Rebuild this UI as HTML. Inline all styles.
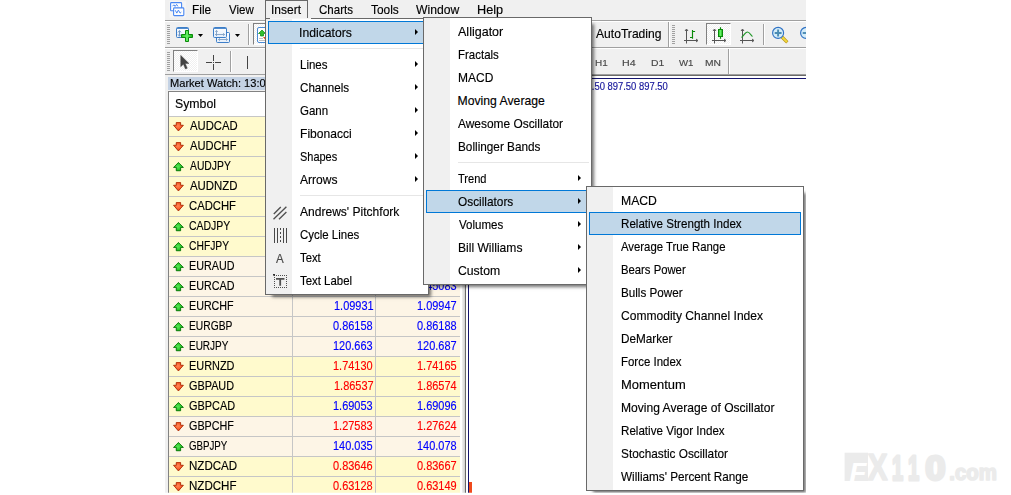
<!DOCTYPE html>
<html lang="en"><head><meta charset="utf-8"><title>MetaTrader - Insert Indicators</title>
<style>
html,body{margin:0;padding:0;background:#fff}
body{width:1011px;height:495px;overflow:hidden;position:relative;font-family:"Liberation Sans",sans-serif;font-size:12.2px;line-height:16px;color:#000}
#app{position:absolute;left:165px;top:0;width:641px;height:493px;background:#f0f0f0;overflow:hidden}
#app i,.menu i,#app div,.menu div{position:absolute;display:block}
.t{position:absolute;white-space:nowrap;transform-origin:0 0;display:block;-webkit-text-stroke:.15px}
.ic{position:absolute;overflow:visible}
.ar{filter:drop-shadow(.5px .7px .5px rgba(0,0,0,.28))}
.hl{left:0;width:641px;height:1px}
.row{left:4px;width:291px;height:19px;border-bottom:1px solid #c6c6c6}
.menu{position:absolute;background:#fff;border:1px solid #696969;box-sizing:border-box}
.sh{position:absolute;box-shadow:1.6px 1.6px 3.2px 0 rgba(0,0,0,.55)}
.menu .gut{left:0;top:0;bottom:0;width:26px;background:#f0f0f0}
.menu .sep{height:1px;background:#e6e6e6}
.menu .hot{height:23px;box-sizing:border-box;border:1px solid #0078d7;background:#c1d7e9}
.menu .arr{width:0;height:0;border-left:3.5px solid #000;border-top:3px solid transparent;border-bottom:3px solid transparent;margin-top:.3px}
.dith{background:repeating-conic-gradient(#fff 0 25%,#f0f0f0 0 50%) 0 0/2px 2px}
.grip{width:3px;background:repeating-linear-gradient(#a0a0a0 0 1px,transparent 1px 2px)}
.vsep{width:1px;background:#a0a0a0;box-shadow:1px 0 0 #fff}
.pressed{box-sizing:border-box;border:1px solid #fff;border-left-color:#808080;border-top-color:#808080}
</style></head>
<body>
<svg width="0" height="0" style="position:absolute"><defs>
<radialGradient id="gu" cx="0.45" cy="0.5" r="0.6"><stop offset="0" stop-color="#58e858"/><stop offset="0.6" stop-color="#2cc82c"/><stop offset="1" stop-color="#10a010"/></radialGradient>
<radialGradient id="gd" cx="0.45" cy="0.4" r="0.6"><stop offset="0" stop-color="#ff8858"/><stop offset="0.6" stop-color="#f85c2c"/><stop offset="1" stop-color="#d83810"/></radialGradient>
<linearGradient id="gp" x1="0" y1="0" x2="1" y2="0"><stop offset="0" stop-color="#22c422"/><stop offset="0.5" stop-color="#66f066"/><stop offset="1" stop-color="#12b012"/></linearGradient>
<linearGradient id="gw" x1="0" y1="0" x2="0" y2="1"><stop offset="0" stop-color="#ffffff"/><stop offset="1" stop-color="#e4eefa"/></linearGradient>
</defs></svg>
<div id="app">
<i class="hl" style="top:20px;background:#a0a0a0"></i><i class="hl" style="top:21px;background:#fff"></i>
<i class="hl" style="top:47px;background:#a0a0a0"></i><i class="hl" style="top:48px;background:#fff"></i>
<i class="hl" style="top:74px;background:#a0a0a0"></i>
<i style="left:300px;top:75px;width:341px;height:1px;background:#696969"></i>
<div style="left:301px;top:76px;width:340px;height:420px;background:#fff"></div>
<i style="left:300px;top:76px;width:1px;height:420px;background:#696969"></i>
<i style="left:303px;top:78px;width:338px;height:1px;background:#14146e"></i>
<i style="left:303px;top:78px;width:1px;height:420px;background:#14146e"></i>
<i style="left:304px;top:482px;width:3px;height:12px;background:#f04a1c"></i>
<div style="left:3px;top:77px;width:294px;height:13px;background:#c4d2e4"></div>
<div style="left:3px;top:91px;width:294px;height:410px;background:#fff;border-left:1px solid #828282;border-top:1px solid #828282;box-sizing:border-box"></div>
<i style="left:297px;top:91px;width:3px;height:410px;background:linear-gradient(90deg,#f0f0f0,#d0d0d0)"></i>
<i style="left:4px;top:116px;width:291px;height:1px;background:#c6c6c6"></i>
<div class="row" style="top:117px;background:#fffacd"></div>
<svg class="ic ar" style="left:8.099999999999994px;top:122.0px" width="12" height="11" viewBox="0 0 12 11"><path d="M3.3 0.6 L7.6 0.6 L7.6 3.3 L10.3 3.3 L5.45 8.9 L0.6 3.3 L3.3 3.3 Z" fill="url(#gd)" stroke="#b83008" stroke-width="0.9" stroke-linejoin="round"/></svg>
<div class="row" style="top:137px;background:#fffacd"></div>
<svg class="ic ar" style="left:8.099999999999994px;top:142.0px" width="12" height="11" viewBox="0 0 12 11"><path d="M3.3 0.6 L7.6 0.6 L7.6 3.3 L10.3 3.3 L5.45 8.9 L0.6 3.3 L3.3 3.3 Z" fill="url(#gd)" stroke="#b83008" stroke-width="0.9" stroke-linejoin="round"/></svg>
<div class="row" style="top:157px;background:#fffacd"></div>
<svg class="ic ar" style="left:8.099999999999994px;top:162.0px" width="12" height="11" viewBox="0 0 12 11"><path d="M5.45 0.5 L10.3 5.4 L7.6 5.4 L7.6 8.7 L3.3 8.7 L3.3 5.4 L0.6 5.4 Z" fill="url(#gu)" stroke="#087c08" stroke-width="0.9" stroke-linejoin="round"/></svg>
<div class="row" style="top:177px;background:#fffacd"></div>
<svg class="ic ar" style="left:8.099999999999994px;top:182.0px" width="12" height="11" viewBox="0 0 12 11"><path d="M3.3 0.6 L7.6 0.6 L7.6 3.3 L10.3 3.3 L5.45 8.9 L0.6 3.3 L3.3 3.3 Z" fill="url(#gd)" stroke="#b83008" stroke-width="0.9" stroke-linejoin="round"/></svg>
<div class="row" style="top:197px;background:#fffacd"></div>
<svg class="ic ar" style="left:8.099999999999994px;top:202.0px" width="12" height="11" viewBox="0 0 12 11"><path d="M3.3 0.6 L7.6 0.6 L7.6 3.3 L10.3 3.3 L5.45 8.9 L0.6 3.3 L3.3 3.3 Z" fill="url(#gd)" stroke="#b83008" stroke-width="0.9" stroke-linejoin="round"/></svg>
<div class="row" style="top:217px;background:#fffacd"></div>
<svg class="ic ar" style="left:8.099999999999994px;top:222.0px" width="12" height="11" viewBox="0 0 12 11"><path d="M5.45 0.5 L10.3 5.4 L7.6 5.4 L7.6 8.7 L3.3 8.7 L3.3 5.4 L0.6 5.4 Z" fill="url(#gu)" stroke="#087c08" stroke-width="0.9" stroke-linejoin="round"/></svg>
<div class="row" style="top:237px;background:#fffacd"></div>
<svg class="ic ar" style="left:8.099999999999994px;top:242.0px" width="12" height="11" viewBox="0 0 12 11"><path d="M5.45 0.5 L10.3 5.4 L7.6 5.4 L7.6 8.7 L3.3 8.7 L3.3 5.4 L0.6 5.4 Z" fill="url(#gu)" stroke="#087c08" stroke-width="0.9" stroke-linejoin="round"/></svg>
<div class="row" style="top:257px;background:#fdf5e6"></div>
<svg class="ic ar" style="left:8.099999999999994px;top:262.0px" width="12" height="11" viewBox="0 0 12 11"><path d="M5.45 0.5 L10.3 5.4 L7.6 5.4 L7.6 8.7 L3.3 8.7 L3.3 5.4 L0.6 5.4 Z" fill="url(#gu)" stroke="#087c08" stroke-width="0.9" stroke-linejoin="round"/></svg>
<div class="row" style="top:277px;background:#fdf5e6"></div>
<svg class="ic ar" style="left:8.099999999999994px;top:282.0px" width="12" height="11" viewBox="0 0 12 11"><path d="M5.45 0.5 L10.3 5.4 L7.6 5.4 L7.6 8.7 L3.3 8.7 L3.3 5.4 L0.6 5.4 Z" fill="url(#gu)" stroke="#087c08" stroke-width="0.9" stroke-linejoin="round"/></svg>
<div class="row" style="top:297px;background:#fdf5e6"></div>
<svg class="ic ar" style="left:8.099999999999994px;top:302.0px" width="12" height="11" viewBox="0 0 12 11"><path d="M5.45 0.5 L10.3 5.4 L7.6 5.4 L7.6 8.7 L3.3 8.7 L3.3 5.4 L0.6 5.4 Z" fill="url(#gu)" stroke="#087c08" stroke-width="0.9" stroke-linejoin="round"/></svg>
<div class="row" style="top:317px;background:#fdf5e6"></div>
<svg class="ic ar" style="left:8.099999999999994px;top:322.0px" width="12" height="11" viewBox="0 0 12 11"><path d="M5.45 0.5 L10.3 5.4 L7.6 5.4 L7.6 8.7 L3.3 8.7 L3.3 5.4 L0.6 5.4 Z" fill="url(#gu)" stroke="#087c08" stroke-width="0.9" stroke-linejoin="round"/></svg>
<div class="row" style="top:337px;background:#fdf5e6"></div>
<svg class="ic ar" style="left:8.099999999999994px;top:342.0px" width="12" height="11" viewBox="0 0 12 11"><path d="M5.45 0.5 L10.3 5.4 L7.6 5.4 L7.6 8.7 L3.3 8.7 L3.3 5.4 L0.6 5.4 Z" fill="url(#gu)" stroke="#087c08" stroke-width="0.9" stroke-linejoin="round"/></svg>
<div class="row" style="top:357px;background:#fffacd"></div>
<svg class="ic ar" style="left:8.099999999999994px;top:362.0px" width="12" height="11" viewBox="0 0 12 11"><path d="M3.3 0.6 L7.6 0.6 L7.6 3.3 L10.3 3.3 L5.45 8.9 L0.6 3.3 L3.3 3.3 Z" fill="url(#gd)" stroke="#b83008" stroke-width="0.9" stroke-linejoin="round"/></svg>
<div class="row" style="top:377px;background:#fffacd"></div>
<svg class="ic ar" style="left:8.099999999999994px;top:382.0px" width="12" height="11" viewBox="0 0 12 11"><path d="M3.3 0.6 L7.6 0.6 L7.6 3.3 L10.3 3.3 L5.45 8.9 L0.6 3.3 L3.3 3.3 Z" fill="url(#gd)" stroke="#b83008" stroke-width="0.9" stroke-linejoin="round"/></svg>
<div class="row" style="top:397px;background:#fffacd"></div>
<svg class="ic ar" style="left:8.099999999999994px;top:402.0px" width="12" height="11" viewBox="0 0 12 11"><path d="M5.45 0.5 L10.3 5.4 L7.6 5.4 L7.6 8.7 L3.3 8.7 L3.3 5.4 L0.6 5.4 Z" fill="url(#gu)" stroke="#087c08" stroke-width="0.9" stroke-linejoin="round"/></svg>
<div class="row" style="top:417px;background:#fdf5e6"></div>
<svg class="ic ar" style="left:8.099999999999994px;top:422.0px" width="12" height="11" viewBox="0 0 12 11"><path d="M3.3 0.6 L7.6 0.6 L7.6 3.3 L10.3 3.3 L5.45 8.9 L0.6 3.3 L3.3 3.3 Z" fill="url(#gd)" stroke="#b83008" stroke-width="0.9" stroke-linejoin="round"/></svg>
<div class="row" style="top:437px;background:#fdf5e6"></div>
<svg class="ic ar" style="left:8.099999999999994px;top:442.0px" width="12" height="11" viewBox="0 0 12 11"><path d="M5.45 0.5 L10.3 5.4 L7.6 5.4 L7.6 8.7 L3.3 8.7 L3.3 5.4 L0.6 5.4 Z" fill="url(#gu)" stroke="#087c08" stroke-width="0.9" stroke-linejoin="round"/></svg>
<div class="row" style="top:457px;background:#fffacd"></div>
<svg class="ic ar" style="left:8.099999999999994px;top:462.0px" width="12" height="11" viewBox="0 0 12 11"><path d="M3.3 0.6 L7.6 0.6 L7.6 3.3 L10.3 3.3 L5.45 8.9 L0.6 3.3 L3.3 3.3 Z" fill="url(#gd)" stroke="#b83008" stroke-width="0.9" stroke-linejoin="round"/></svg>
<div class="row" style="top:477px;background:#fffacd"></div>
<svg class="ic ar" style="left:8.099999999999994px;top:482.0px" width="12" height="11" viewBox="0 0 12 11"><path d="M3.3 0.6 L7.6 0.6 L7.6 3.3 L10.3 3.3 L5.45 8.9 L0.6 3.3 L3.3 3.3 Z" fill="url(#gd)" stroke="#b83008" stroke-width="0.9" stroke-linejoin="round"/></svg>
<i style="left:127px;top:92px;width:1px;height:410px;background:#c6c6c6"></i>
<i style="left:210px;top:92px;width:1px;height:410px;background:#c6c6c6"></i>
<svg class="ic" style="left:4px;top:0" width="20" height="18" viewBox="0 0 20 18">
<rect x="0.5" y="1" width="16.5" height="16.5" fill="#f5f5f5"/>
<rect x="1.6" y="2.6" width="11" height="8.2" rx="0.8" fill="#fff" stroke="#4a88f2" stroke-width="1.1"/>
<path d="M3.5 6.2 l1.4-1.4 1.2 1.6 1.5-2 1.3 2" fill="none" stroke="#4a88f2" stroke-width="1"/>
<rect x="4.6" y="7.9" width="10.2" height="7.7" rx="0.8" fill="#fff" stroke="#4a88f2" stroke-width="1.1"/>
<path d="M6.3 10.3 l1.5 2.8 1.6-3 1.7 3 1.2-1" fill="none" stroke="#4a88f2" stroke-width="1"/>
</svg>
<i class="grip" style="left:2px;top:25px;height:19px"></i>
<svg class="ic" style="left:10px;top:26px" width="20" height="18" viewBox="175 26 20 18">
<rect x="176.5" y="27.5" width="12" height="10" rx="1" fill="url(#gw)" stroke="#3d7ec8"/>
<rect x="177" y="28" width="11" height="0.9" fill="#3d7ec8"/>
<path d="M179.5 30.6 v5.6 M178 32.4 l1.5-1.8 1.5 1.8 M178 34.4 l1.5 1.8 1.5-1.8" fill="none" stroke="#6f98c8" stroke-width="1"/>
<path d="M185.5 30.5 h3 v4 h4 v3 h-4 v4 h-3 v-4 h-4 v-3 h4 z" fill="url(#gp)" stroke="#0a8a0a" stroke-linejoin="round"/>
</svg>
<svg class="ic" style="left:33px;top:34px" width="5" height="3" viewBox="0 0 5 3"><path d="M0 0h5L2.5 3z" fill="#000"/></svg>
<svg class="ic" style="left:47px;top:26px" width="20" height="18" viewBox="212 26 20 18">
<rect x="216.5" y="32.5" width="13" height="10" rx="1" fill="url(#gw)" stroke="#3d7ec8"/>
<path d="M218.5 39.5 h9 M220 38.3 l-1.5 1.2 1.5 1.2 M226 38.3 l1.5 1.2 -1.5 1.2" fill="none" stroke="#7f9fc4" stroke-width="0.9"/>
<rect x="213.5" y="27.5" width="13" height="10" rx="1" fill="url(#gw)" stroke="#3d7ec8"/>
<rect x="214" y="28" width="12" height="0.9" fill="#3d7ec8"/>
<path d="M216.5 30.5 v5.5 M215 34.5 h9.5 M215.3 31.8 l1.2-1.4 1.2 1.4 M223.2 33.3 l1.4 1.2 -1.4 1.2" fill="none" stroke="#7f9fc4" stroke-width="0.9"/>
</svg>
<svg class="ic" style="left:70px;top:34px" width="5" height="3" viewBox="0 0 5 3"><path d="M0 0h5L2.5 3z" fill="#000"/></svg>
<i class="vsep" style="left:83px;top:24px;height:21px"></i>
<div class="pressed dith" style="left:88px;top:23px;width:25px;height:22px"></div>
<svg class="ic" style="left:91px;top:26px" width="14" height="18" viewBox="256 26 14 18">
<rect x="257.5" y="27.5" width="12" height="15" rx="1.5" fill="#fff" stroke="#4a8ad4"/>
<path d="M262 30 l3.5 3.5 h-2 v2.5 h-3 v-2.5 h-2 z" fill="#2fc02f" stroke="#0a8a0a" stroke-width="0.7"/>
<path d="M263 37 h4 l-2 2.5z" fill="#e8501a"/>
<path d="M259 38.5h4M259 40.5h7" stroke="#b0b0b0" stroke-width="0.8"/>
</svg>
<i class="vsep" style="left:503px;top:22px;height:25px"></i>
<i class="grip" style="left:507px;top:25px;height:19px"></i>
<svg class="ic" style="left:517px;top:26px" width="18" height="19" viewBox="682 26 18 19">
<path d="M686.5 29.5 v14 M684 40.5 h13.5 M685 31 l1.5-2 1.5 2 M696 39 l2 1.5 -2 1.5" fill="none" stroke="#555" stroke-width="1"/>
<path d="M692.5 30 v8.7 M692.5 31.5 h2.6 M690 37.5 h2.5" fill="none" stroke="#0a8a0a" stroke-width="1.15"/>
</svg>
<div class="pressed dith" style="left:541px;top:23px;width:25px;height:22px"></div>
<svg class="ic" style="left:545px;top:26px" width="18" height="19" viewBox="710 26 18 19">
<path d="M714.5 29.5 v14 M712 40.5 h13.5 M713 31 l1.5-2 1.5 2 M724 39 l2 1.5 -2 1.5" fill="none" stroke="#555" stroke-width="1"/>
<path d="M720.5 27.2 v11.6" stroke="#0a8a0a" stroke-width="1.2"/>
<rect x="718.5" y="29.5" width="4" height="7" fill="url(#gp)" stroke="#0a8a0a"/>
</svg>
<svg class="ic" style="left:573px;top:26px" width="18" height="19" viewBox="738 26 18 19">
<path d="M742.5 29.5 v14 M740 40.5 h13.5 M741 31 l1.5-2 1.5 2 M752 39 l2 1.5 -2 1.5" fill="none" stroke="#555" stroke-width="1"/>
<path d="M741.5 37.5 C744 35 745.5 32 747.5 32 S751 35.5 752.5 36.5" fill="none" stroke="#22982a" stroke-width="1.15"/>
</svg>
<i class="vsep" style="left:598px;top:24px;height:21px"></i>
<svg class="ic" style="left:605px;top:25px" width="20" height="20" viewBox="770 25 20 20">
<path d="M782 37 L787.3 42.3" stroke="#b8901a" stroke-width="3.2"/><path d="M782 37 L787 42" stroke="#f0d83c" stroke-width="1.9"/>
<circle cx="778.1" cy="32.9" r="5.5" fill="#d4ecf8" stroke="#2f72c4" stroke-width="1.15"/>
<path d="M774.7 33 h6.9 M778.1 29.5 v6.9" stroke="#4a8cb4" stroke-width="1.9"/>
</svg>
<svg class="ic" style="left:633px;top:25px" width="20" height="20" viewBox="798 25 20 20">
<circle cx="806.1" cy="32.9" r="5.5" fill="#d4ecf8" stroke="#2f72c4" stroke-width="1.15"/>
<path d="M802.7 33 h6.9" stroke="#4a8cb4" stroke-width="1.9"/>
</svg>
<i class="grip" style="left:2px;top:52px;height:19px"></i>
<div class="pressed dith" style="left:8px;top:50px;width:25px;height:22px"></div>
<svg class="ic" style="left:14px;top:54px" width="12" height="17" viewBox="179 54 12 17">
<path d="M180.7 55.3 v11.5 l2.7-2.6 2 4.8 1.9-0.8 -2-4.7 h3.7 z" fill="#444" stroke="#444" stroke-width="0.4"/>
</svg>
<svg class="ic" style="left:40px;top:54px" width="18" height="18" viewBox="205 54 18 18">
<path d="M213.5 55 v6 M213.5 64 v6 M206 62.5 h6 M215 62.5 h6" stroke="#444" stroke-width="1"/><rect x="213" y="62" width="1" height="1" fill="#444"/>
</svg>
<i class="vsep" style="left:65px;top:51px;height:21px"></i>
<i style="left:82px;top:56px;width:1px;height:13px;background:#444"></i>
<i class="vsep" style="left:563px;top:49px;height:25px"></i>
<span class="t" style="left:27.32px;top:1.77px;transform:scaleX(0.9767)">File</span>
<span class="t" style="left:64.20px;top:1.77px;transform:scaleX(0.9435)">View</span>
<span class="t" style="left:106.09px;top:1.77px;transform:scaleX(0.9827)">Insert</span>
<span class="t" style="left:154.07px;top:1.77px;transform:scaleX(0.9469)">Charts</span>
<span class="t" style="left:205.86px;top:1.77px;transform:scaleX(0.9742)">Tools</span>
<span class="t" style="left:251.30px;top:1.77px;transform:scaleX(0.9988)">Window</span>
<span class="t" style="left:312.36px;top:1.77px;transform:scaleX(1.0416)">Help</span>
<span class="t" style="left:431.20px;top:25.77px;transform:scaleX(0.9935)">AutoTrading</span>
<span class="t" style="left:430.04px;top:56.10px;transform:scaleX(1.0153);font-size:9.8px;line-height:13px;color:#484848">H1</span>
<span class="t" style="left:456.69px;top:56.10px;transform:scaleX(1.0856);font-size:9.8px;line-height:13px;color:#484848">H4</span>
<span class="t" style="left:485.71px;top:56.10px;transform:scaleX(1.0594);font-size:9.8px;line-height:13px;color:#484848">D1</span>
<span class="t" style="left:514.10px;top:56.10px;transform:scaleX(0.9825);font-size:9.8px;line-height:13px;color:#484848">W1</span>
<span class="t" style="left:540.01px;top:56.10px;transform:scaleX(1.0491);font-size:9.8px;line-height:13px;color:#484848">MN</span>
<span class="t" style="left:322.53px;top:80.03px;transform:scaleX(0.9429);font-size:10px;line-height:13px;color:#14149a">XAUUSD,H1  897.50 897.50 897.50 897.50</span>
<span class="t" style="left:5.02px;top:76.19px;transform:scaleX(1.0069);font-size:11px;line-height:14px">Market Watch: 13:05:21</span>
<span class="t" style="left:9.69px;top:95.77px;transform:scaleX(1.0100)">Symbol</span>
<span class="t" style="left:131.99px;top:95.77px;transform:scaleX(1.0100)">Bid</span>
<span class="t" style="left:217.00px;top:95.77px;transform:scaleX(1.0100)">Ask</span>
<span class="t" style="left:24.60px;top:117.77px;transform:scaleX(0.9244)">AUDCAD</span>
<span class="t" style="left:168.44px;top:117.84px;transform:scaleX(0.9129);font-size:12px;line-height:16px;color:#ff0000">0.95513</span>
<span class="t" style="left:252.04px;top:117.84px;transform:scaleX(0.9129);font-size:12px;line-height:16px;color:#ff0000">0.95546</span>
<span class="t" style="left:24.60px;top:137.77px;transform:scaleX(0.9151)">AUDCHF</span>
<span class="t" style="left:168.50px;top:137.84px;transform:scaleX(0.9129);font-size:12px;line-height:16px;color:#ff0000">0.72057</span>
<span class="t" style="left:252.10px;top:137.84px;transform:scaleX(0.9129);font-size:12px;line-height:16px;color:#ff0000">0.72082</span>
<span class="t" style="left:24.60px;top:157.77px;transform:scaleX(0.8482)">AUDJPY</span>
<span class="t" style="left:174.59px;top:157.84px;transform:scaleX(0.9129);font-size:12px;line-height:16px;color:#0000ff">79.089</span>
<span class="t" style="left:258.89px;top:157.84px;transform:scaleX(0.9129);font-size:12px;line-height:16px;color:#0000ff">79.110</span>
<span class="t" style="left:24.60px;top:177.77px;transform:scaleX(0.9370)">AUDNZD</span>
<span class="t" style="left:168.50px;top:177.84px;transform:scaleX(0.9129);font-size:12px;line-height:16px;color:#ff0000">1.14127</span>
<span class="t" style="left:252.04px;top:177.84px;transform:scaleX(0.9129);font-size:12px;line-height:16px;color:#ff0000">1.14166</span>
<span class="t" style="left:24.08px;top:197.77px;transform:scaleX(0.9254)">CADCHF</span>
<span class="t" style="left:168.50px;top:197.84px;transform:scaleX(0.9129);font-size:12px;line-height:16px;color:#ff0000">0.75431</span>
<span class="t" style="left:252.04px;top:197.84px;transform:scaleX(0.9129);font-size:12px;line-height:16px;color:#ff0000">0.75456</span>
<span class="t" style="left:24.12px;top:217.77px;transform:scaleX(0.8583)">CADJPY</span>
<span class="t" style="left:174.37px;top:217.84px;transform:scaleX(0.9129);font-size:12px;line-height:16px;color:#0000ff">82.794</span>
<span class="t" style="left:258.14px;top:217.84px;transform:scaleX(0.9129);font-size:12px;line-height:16px;color:#0000ff">82.823</span>
<span class="t" style="left:24.12px;top:237.77px;transform:scaleX(0.8451)">CHFJPY</span>
<span class="t" style="left:168.44px;top:237.84px;transform:scaleX(0.9129);font-size:12px;line-height:16px;color:#0000ff">109.746</span>
<span class="t" style="left:252.10px;top:237.84px;transform:scaleX(0.9129);font-size:12px;line-height:16px;color:#0000ff">109.779</span>
<span class="t" style="left:23.72px;top:257.77px;transform:scaleX(0.8828)">EURAUD</span>
<span class="t" style="left:168.44px;top:257.84px;transform:scaleX(0.9129);font-size:12px;line-height:16px;color:#0000ff">1.52548</span>
<span class="t" style="left:252.04px;top:257.84px;transform:scaleX(0.9129);font-size:12px;line-height:16px;color:#0000ff">1.52583</span>
<span class="t" style="left:23.72px;top:277.77px;transform:scaleX(0.8828)">EURCAD</span>
<span class="t" style="left:168.50px;top:277.84px;transform:scaleX(0.9129);font-size:12px;line-height:16px;color:#0000ff">1.45049</span>
<span class="t" style="left:252.04px;top:277.84px;transform:scaleX(0.9129);font-size:12px;line-height:16px;color:#0000ff">1.45083</span>
<span class="t" style="left:23.72px;top:297.77px;transform:scaleX(0.8790)">EURCHF</span>
<span class="t" style="left:168.50px;top:297.84px;transform:scaleX(0.9129);font-size:12px;line-height:16px;color:#0000ff">1.09931</span>
<span class="t" style="left:252.10px;top:297.84px;transform:scaleX(0.9129);font-size:12px;line-height:16px;color:#0000ff">1.09947</span>
<span class="t" style="left:23.76px;top:317.77px;transform:scaleX(0.8420)">EURGBP</span>
<span class="t" style="left:168.44px;top:317.84px;transform:scaleX(0.9129);font-size:12px;line-height:16px;color:#0000ff">0.86158</span>
<span class="t" style="left:252.04px;top:317.84px;transform:scaleX(0.9129);font-size:12px;line-height:16px;color:#0000ff">0.86188</span>
<span class="t" style="left:23.78px;top:337.77px;transform:scaleX(0.8193)">EURJPY</span>
<span class="t" style="left:168.44px;top:337.84px;transform:scaleX(0.9129);font-size:12px;line-height:16px;color:#0000ff">120.663</span>
<span class="t" style="left:252.10px;top:337.84px;transform:scaleX(0.9129);font-size:12px;line-height:16px;color:#0000ff">120.687</span>
<span class="t" style="left:23.70px;top:357.77px;transform:scaleX(0.8951)">EURNZD</span>
<span class="t" style="left:168.39px;top:357.84px;transform:scaleX(0.9129);font-size:12px;line-height:16px;color:#ff0000">1.74130</span>
<span class="t" style="left:252.04px;top:357.84px;transform:scaleX(0.9129);font-size:12px;line-height:16px;color:#ff0000">1.74165</span>
<span class="t" style="left:24.10px;top:377.77px;transform:scaleX(0.8911)">GBPAUD</span>
<span class="t" style="left:168.50px;top:377.84px;transform:scaleX(0.9129);font-size:12px;line-height:16px;color:#ff0000">1.86537</span>
<span class="t" style="left:251.87px;top:377.84px;transform:scaleX(0.9129);font-size:12px;line-height:16px;color:#ff0000">1.86574</span>
<span class="t" style="left:24.10px;top:397.77px;transform:scaleX(0.8949)">GBPCAD</span>
<span class="t" style="left:168.44px;top:397.84px;transform:scaleX(0.9129);font-size:12px;line-height:16px;color:#0000ff">1.69053</span>
<span class="t" style="left:252.04px;top:397.84px;transform:scaleX(0.9129);font-size:12px;line-height:16px;color:#0000ff">1.69096</span>
<span class="t" style="left:24.10px;top:417.77px;transform:scaleX(0.8852)">GBPCHF</span>
<span class="t" style="left:168.44px;top:417.84px;transform:scaleX(0.9129);font-size:12px;line-height:16px;color:#ff0000">1.27583</span>
<span class="t" style="left:251.87px;top:417.84px;transform:scaleX(0.9129);font-size:12px;line-height:16px;color:#ff0000">1.27624</span>
<span class="t" style="left:24.15px;top:437.77px;transform:scaleX(0.7968)">GBPJPY</span>
<span class="t" style="left:168.44px;top:437.84px;transform:scaleX(0.9129);font-size:12px;line-height:16px;color:#0000ff">140.035</span>
<span class="t" style="left:252.04px;top:437.84px;transform:scaleX(0.9129);font-size:12px;line-height:16px;color:#0000ff">140.078</span>
<span class="t" style="left:23.65px;top:457.77px;transform:scaleX(0.9479)">NZDCAD</span>
<span class="t" style="left:168.44px;top:457.84px;transform:scaleX(0.9129);font-size:12px;line-height:16px;color:#ff0000">0.83646</span>
<span class="t" style="left:252.10px;top:457.84px;transform:scaleX(0.9129);font-size:12px;line-height:16px;color:#ff0000">0.83667</span>
<span class="t" style="left:23.65px;top:477.77px;transform:scaleX(0.9488)">NZDCHF</span>
<span class="t" style="left:168.44px;top:477.84px;transform:scaleX(0.9129);font-size:12px;line-height:16px;color:#ff0000">0.63128</span>
<span class="t" style="left:252.10px;top:477.84px;transform:scaleX(0.9129);font-size:12px;line-height:16px;color:#ff0000">0.63149</span>
<i style="left:100px;top:0;width:43px;height:19px;box-sizing:border-box;border:1px solid #696969;border-bottom:0"></i>
<i class="sh" style="left:105px;top:23px;width:159px;height:272px"></i>
<i class="sh" style="left:263px;top:22px;width:164px;height:263px"></i>
<i class="sh" style="left:426px;top:191px;width:213px;height:300px"></i>
<div class="menu" id="m1" style="left:100px;top:18px;width:164px;height:277px">
<div class="gut"></div>
<i class="hot" style="left:2px;top:2px;width:158px"></i>
<i class="arr" style="left:149.3px;top:10px"></i>
<i class="sep" style="left:34px;top:29px;width:126px"></i>
<i class="arr" style="left:149.3px;top:42px"></i>
<i class="arr" style="left:149.3px;top:65px"></i>
<i class="arr" style="left:149.3px;top:88px"></i>
<i class="arr" style="left:149.3px;top:111px"></i>
<i class="arr" style="left:149.3px;top:134px"></i>
<i class="arr" style="left:149.3px;top:157px"></i>
<i class="sep" style="left:34px;top:176px;width:126px"></i>
<span class="t" style="left:33.47px;top:5.77px;transform:scaleX(1.0009)">Indicators</span>
<span class="t" style="left:33.66px;top:37.77px;transform:scaleX(0.9441)">Lines</span>
<span class="t" style="left:34.06px;top:60.77px;transform:scaleX(0.9532)">Channels</span>
<span class="t" style="left:34.07px;top:83.77px;transform:scaleX(0.9440)">Gann</span>
<span class="t" style="left:33.61px;top:106.77px;transform:scaleX(0.9913)">Fibonacci</span>
<span class="t" style="left:34.15px;top:129.77px;transform:scaleX(0.8996)">Shapes</span>
<span class="t" style="left:33.90px;top:152.77px;transform:scaleX(0.9882)">Arrows</span>
<span class="t" style="left:33.90px;top:184.77px;transform:scaleX(0.9884)">Andrews' Pitchfork</span>
<span class="t" style="left:34.07px;top:207.77px;transform:scaleX(0.9407)">Cycle Lines</span>
<span class="t" style="left:34.37px;top:230.77px;transform:scaleX(0.9253)">Text</span>
<span class="t" style="left:34.37px;top:253.77px;transform:scaleX(0.9361)">Text Label</span>
<svg class="ic" style="left:6px;top:186px" width="16" height="16" viewBox="272 205 16 16"><path d="M273.8 213.9 L280.8 207 M273.5 219.3 L286.4 206.7 M279 219.3 L286.4 212" stroke="#505050" stroke-width="1.35" fill="none"/></svg>
<svg class="ic" style="left:6px;top:208px" width="16" height="17" viewBox="272 227 16 17"><path d="M274.5 228 v15 M277.5 228 v15 M283.5 228 v15 M286.5 228 v15" stroke="#484848" stroke-width="1"/><path d="M280.5 228 v15" stroke="#484848" stroke-width="1" stroke-dasharray="2 2"/></svg>
<svg class="ic" style="left:6px;top:255px" width="16" height="16" viewBox="272 274 16 16"><path d="M274 275.5 h13 M274 287.5 h13 M274.5 275 v13 M286.5 275 v13" fill="none" stroke="#505050" stroke-width="1" stroke-dasharray="1 1"/><path d="M276 278.9 h8.4 M280.2 278.2 v7.6" stroke="#505050" stroke-width="1.8"/><rect x="273" y="274" width="2" height="1.6" fill="#303030"/></svg>
<span class="t" style="left:9.7px;top:231.9px;color:#484848;transform:scaleX(.95)">A</span>
<i style="left:4px;top:-1px;width:41px;height:1px;background:#f6f6f6"></i>
</div>
<div class="menu" id="m2" style="left:258px;top:17px;width:169px;height:268px">
<div class="gut"></div>
<i class="sep" style="left:34px;top:144px;width:131px"></i>
<i class="arr" style="left:154.3px;top:157px"></i>
<i class="hot" style="left:2px;top:172px;width:163px"></i>
<i class="arr" style="left:154.3px;top:180px"></i>
<i class="arr" style="left:154.3px;top:203px"></i>
<i class="arr" style="left:154.3px;top:226px"></i>
<i class="arr" style="left:154.3px;top:249px"></i>
<span class="t" style="left:33.90px;top:5.77px;transform:scaleX(1.0277)">Alligator</span>
<span class="t" style="left:33.66px;top:28.77px;transform:scaleX(0.9411)">Fractals</span>
<span class="t" style="left:33.62px;top:51.77px;transform:scaleX(0.9837)">MACD</span>
<span class="t" style="left:33.60px;top:74.77px;transform:scaleX(1.0000)">Moving Average</span>
<span class="t" style="left:33.90px;top:97.77px;transform:scaleX(0.9778)">Awesome Oscillator</span>
<span class="t" style="left:33.63px;top:120.77px;transform:scaleX(0.9663)">Bollinger Bands</span>
<span class="t" style="left:34.37px;top:152.77px;transform:scaleX(0.9085)">Trend</span>
<span class="t" style="left:34.05px;top:175.77px;transform:scaleX(0.9720)">Oscillators</span>
<span class="t" style="left:34.60px;top:198.77px;transform:scaleX(0.9466)">Volumes</span>
<span class="t" style="left:33.61px;top:221.77px;transform:scaleX(0.9914)">Bill Williams</span>
<span class="t" style="left:34.04px;top:244.77px;transform:scaleX(1.0029)">Custom</span>
</div>
<div class="menu" id="m3" style="left:421px;top:186px;width:218px;height:305px">
<div class="gut"></div>
<i class="hot" style="left:2px;top:25px;width:212px"></i>
<span class="t" style="left:33.60px;top:5.77px;transform:scaleX(1.0012)">MACD</span>
<span class="t" style="left:33.65px;top:28.77px;transform:scaleX(0.9522)">Relative Strength Index</span>
<span class="t" style="left:33.90px;top:51.77px;transform:scaleX(0.9309)">Average True Range</span>
<span class="t" style="left:33.67px;top:74.77px;transform:scaleX(0.9265)">Bears Power</span>
<span class="t" style="left:33.64px;top:97.77px;transform:scaleX(0.9569)">Bulls Power</span>
<span class="t" style="left:34.04px;top:120.77px;transform:scaleX(0.9889)">Commodity Channel Index</span>
<span class="t" style="left:33.64px;top:143.77px;transform:scaleX(0.9625)">DeMarker</span>
<span class="t" style="left:33.66px;top:166.77px;transform:scaleX(0.9397)">Force Index</span>
<span class="t" style="left:33.54px;top:189.77px;transform:scaleX(1.0620)">Momentum</span>
<span class="t" style="left:33.61px;top:212.77px;transform:scaleX(0.9907)">Moving Average of Oscillator</span>
<span class="t" style="left:33.65px;top:235.77px;transform:scaleX(0.9522)">Relative Vigor Index</span>
<span class="t" style="left:34.12px;top:258.77px;transform:scaleX(0.9689)">Stochastic Oscillator</span>
<span class="t" style="left:33.90px;top:281.77px;transform:scaleX(0.9624)">Williams' Percent Range</span>
</div>
<i style="left:0;top:492px;width:641px;height:1px;background:rgba(255,255,255,.25)"></i>
</div>
<svg id="wm" style="position:absolute;left:840px;top:445px" width="165" height="45" viewBox="840 445 165 45" font-family="Liberation Sans, sans-serif" font-weight="bold" stroke="#ebebeb" stroke-linejoin="round"><rect x="844.6" y="452.7" width="23.4" height="28.3" fill="#ebebeb" stroke="none"/><text transform="translate(849.24 481.50) scale(1.0415 1)" font-size="27.00" fill="#fff" stroke="none" font-style="italic">F</text><text transform="translate(867.75 480.25) scale(0.7958 1)" font-size="37.41" fill="#ebebeb" stroke-width="1.5">X</text><text transform="translate(892.05 479.50) scale(0.5679 1)" font-size="35.31" fill="#ebebeb" stroke-width="3">1</text><text transform="translate(908.05 479.50) scale(0.5679 1)" font-size="35.31" fill="#ebebeb" stroke-width="3">1</text><text transform="translate(925.36 479.80) scale(1.0349 1)" font-size="35.31" fill="#ebebeb" stroke-width="3">0</text><text transform="translate(949.32 480.20) scale(0.9505 1)" font-size="21.47" fill="#ebebeb" stroke-width="1.6">.com</text></svg>
</body></html>
